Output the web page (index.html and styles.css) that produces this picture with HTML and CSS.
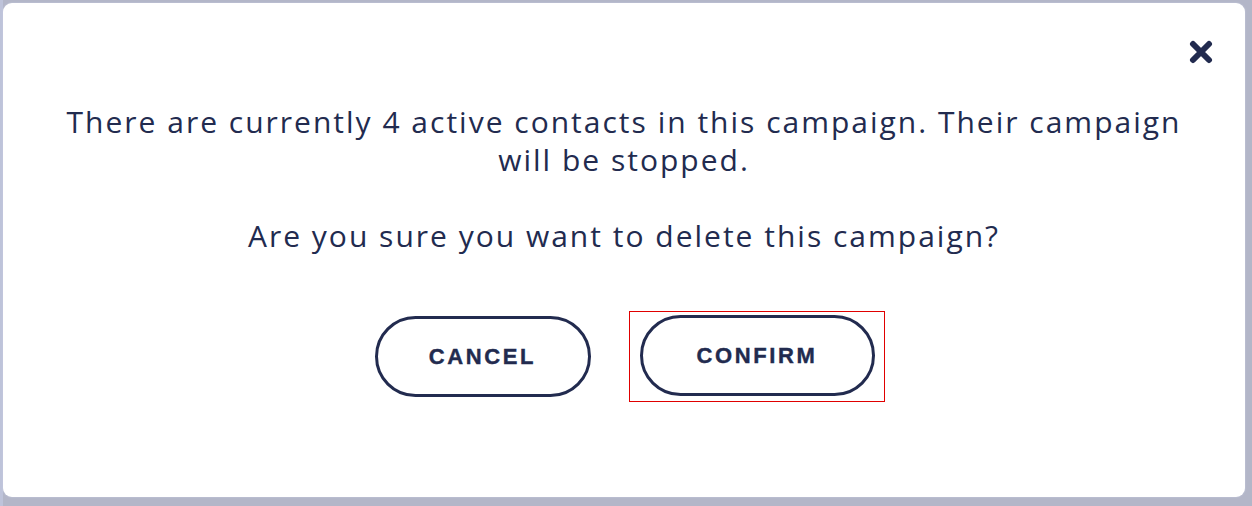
FILE: index.html
```html
<!DOCTYPE html>
<html>
  <head>
    <title>Delete campaign</title>
    <link rel="stylesheet" href="styles.css">
  </head>
  <body>
    <div class="overlay">
      <div class="modal">
        <div class="modal-head">
          <button class="close-btn" aria-label="Close">
            <svg width="24" height="24" viewBox="0 0 24 24">
              <path d="M4 4 L20 20 M20 4 L4 20" stroke="#222b4f" stroke-width="6" stroke-linecap="round" fill="none"/>
            </svg>
          </button>
        </div>
        <p class="message">There are currently 4 active contacts in this campaign. Their campaign will be stopped.</p>
        <p class="message question">Are you sure you want to delete this campaign?</p>
        <div class="actions">
          <button class="pill-btn">Cancel</button>
          <span class="focus-ring"><button class="pill-btn">Confirm</button></span>
        </div>
      </div>
    </div>
  </body>
</html>
```

FILE: styles.css
```css
/* ページ全体 */
body {
    margin: 0;
    background-color: #b3b6c8;
    font-family: "Open Sans", "Liberation Sans", sans-serif;
    color: #222b4f;
}

.overlay {
    height: 506px;
    box-sizing: border-box;
    padding: 3px 7px 9px 3px;
    background: linear-gradient(to right, #bec3da 0, #bec3da 3px, #b3b6c8 3px);
}

/* モーダル */
.modal {
    height: 100%;
    background-color: #fff;
    border-radius: 9px;
    box-shadow: 0 0 2px #c9cee2;
    box-sizing: border-box;
    padding: 37px 0 0;
    text-align: center;
}

.modal-head {
    display: flex;
    justify-content: flex-end;
    padding-right: 32px;
    height: 24px;
}

.close-btn {
    background: none;
    border: none;
    padding: 0;
    width: 24px;
    height: 24px;
    cursor: pointer;
}

.message {
    margin: 39px auto 0;
    width: 1160px;
    font-size: 30px;
    line-height: 38px;
    letter-spacing: 2px;
}

.question {
    margin-top: 38px;
}

/* ボタン */
.actions {
    display: flex;
    justify-content: center;
    align-items: center;
    gap: 38px;
    margin-top: 56px;
    padding-left: 11px;
}

.pill-btn {
    width: 216px;
    height: 81px;
    border: 3px solid #222b4f;
    border-radius: 41px;
    background: #fff;
    color: #222b4f;
    font-family: "Liberation Sans", Arial, sans-serif;
    font-weight: bold;
    font-size: 22px;
    letter-spacing: 2.6px;
    text-transform: uppercase;
    -webkit-text-stroke: 0.4px #222b4f;
    cursor: pointer;
}

.focus-ring {
    display: flex;
    border: 1px solid #e00000;
    padding: 3px 9px 5px 10px;
}

.focus-ring .pill-btn {
    width: 235px;
}
```
